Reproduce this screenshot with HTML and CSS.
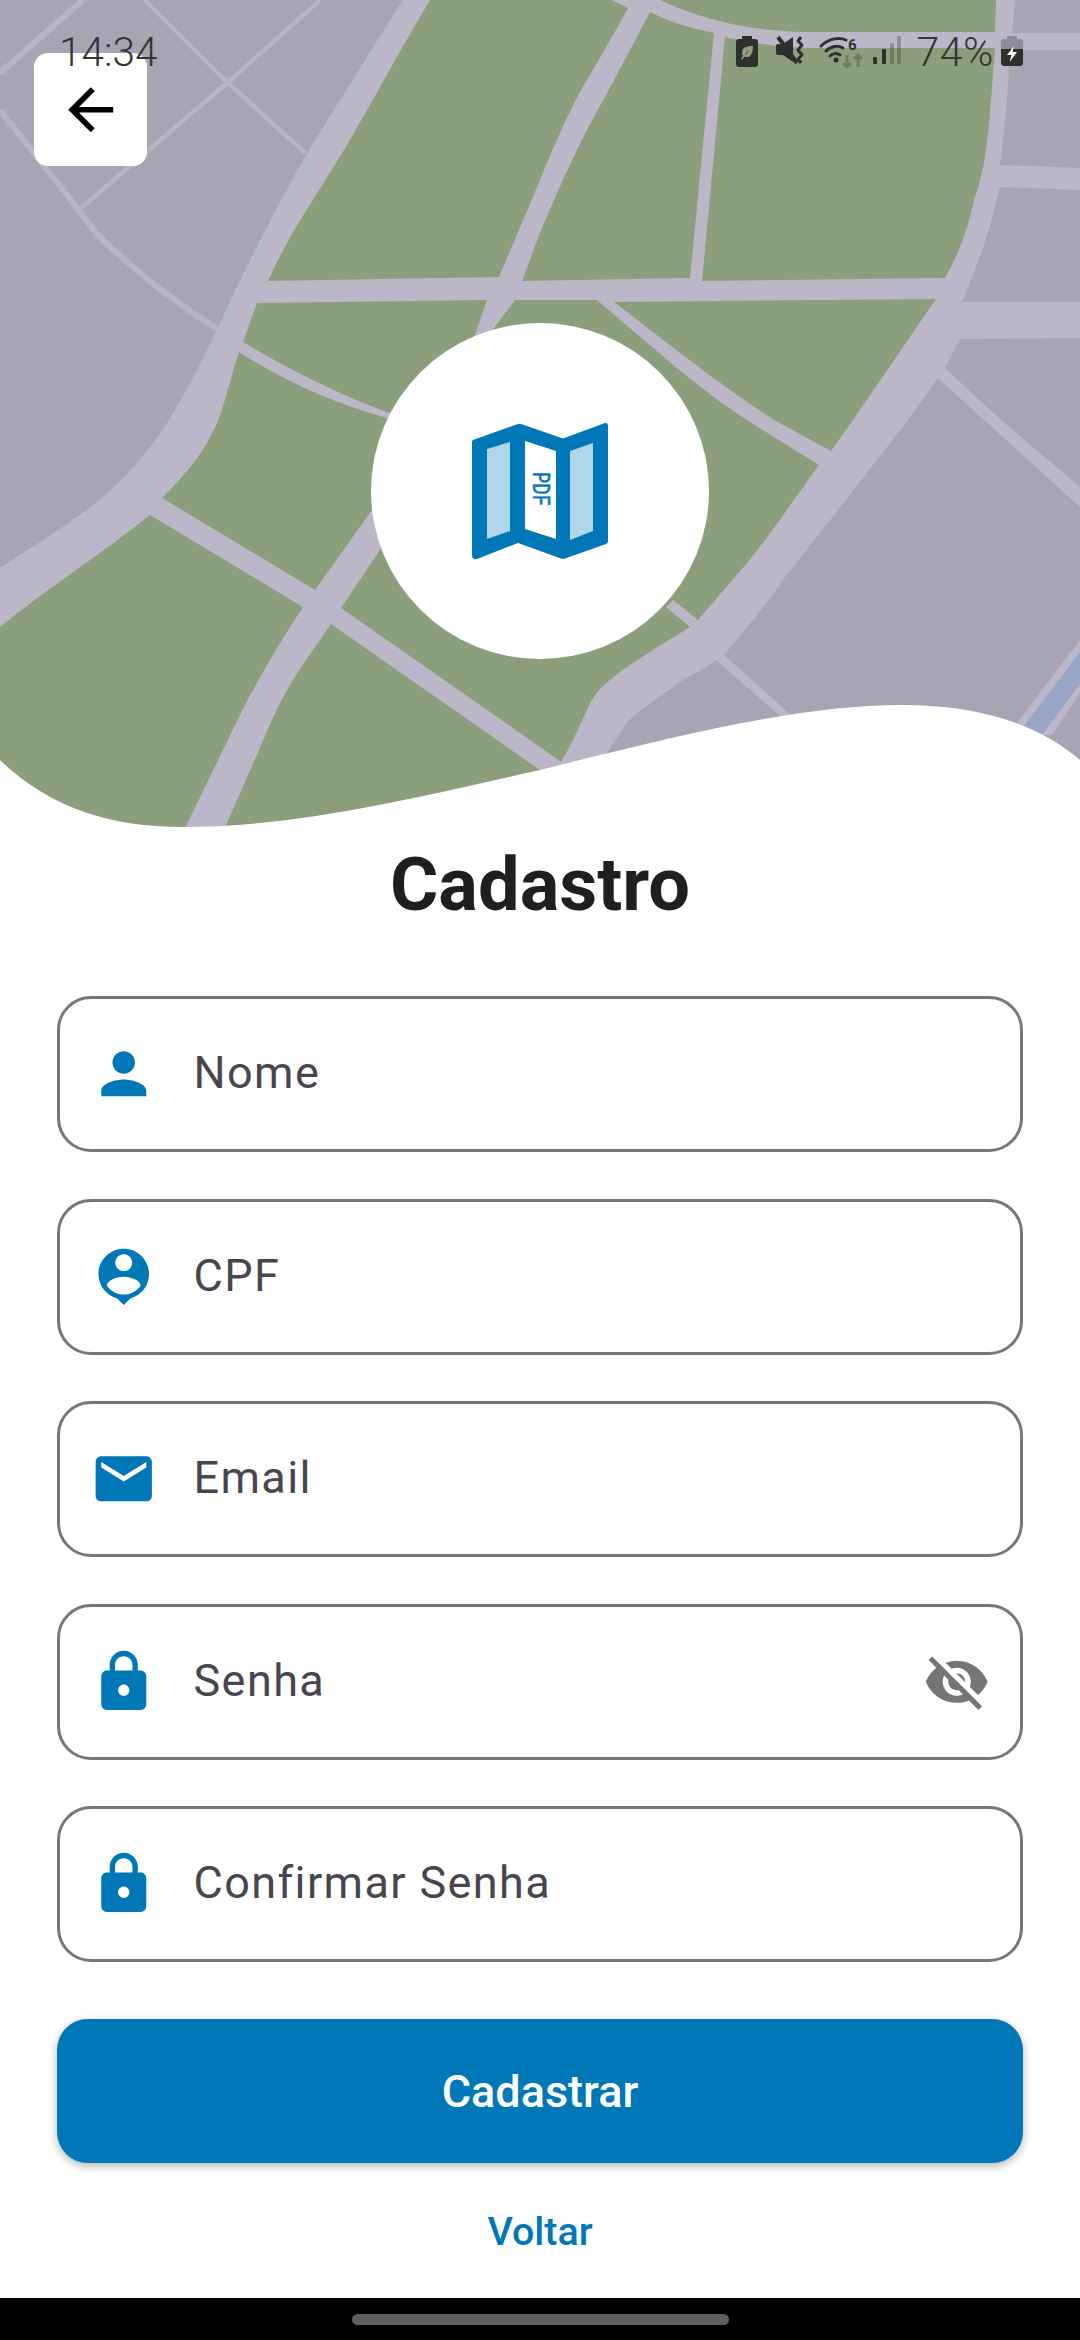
FILE: index.html
```html
<!DOCTYPE html>
<html lang="pt">
<head>
<meta charset="utf-8">
<title>Cadastro</title>
<link rel="stylesheet" href="styles.css">
</head>
<body>
<div class="screen">
  <header class="hero">
    <svg class="map" viewBox="0 0 1080 830" width="1080" height="830">
      <rect class="road" width="1080" height="830"/>
      <g class="gray">
        <path d="M0,0 L403,0 C370,52 335,108 305,157 C280,200 250,260 234,293 C225,312 200,370 169,420 C150,450 128,475 103,497 C75,520 40,542 0,568 Z"/>
        <path d="M1015,0 L1080,0 L1080,33 L1012,33 Z"/>
        <path d="M1010,50 L1080,50 L1080,168 L1000,165 C1005,130 1008,90 1010,50 Z"/>
        <path d="M1000,187 L1080,190 L1080,302 L962,302 C975,270 985,245 990,225 Z"/>
        <path d="M960,339 L1080,338 L1080,487 L1001,420 L945,368 Z"/>
        <path d="M938,378 L1080,507 L1080,830 L800,830 L791,715 L724,655 C745,630 770,600 782,581 L838,510 L908,420 Z"/>
        <path d="M716,660 C700,672 690,675 678,683 C650,705 630,715 622,730 L607,753 L600,830 L781,830 L781,717 Z"/>
      </g>
      <g class="thin">
        <path class="t7" d="M83,0 L0,73"/>
        <path class="t5" d="M145,0 L227,82 L305,153"/>
        <path class="t5" d="M320,0 L227,83 L81,208"/>
        <path class="t7" d="M0,110 L77,208 Q90,226 103,240 Q155,290 219,330"/>
      </g>
      <path class="bank" d="M1080,640 L1008,735 L1052,735 L1080,693 Z"/>
      <path class="river" d="M1080,652 L1017,735 L1042,735 L1080,684 Z"/>
      <g class="green">
        <path d="M430,0 L612,0 L628,8 C605,50 590,75 581,90 C565,120 550,155 540,180 L499,277 L268,281 C290,232 315,198 344,150 C375,97 400,50 430,0 Z"/>
        <path d="M650,12 C670,22 690,28 714,33 L690,278 L522,281 L540,233 C560,185 580,140 605,97 Z"/>
        <path d="M725,37 C760,45 790,48 815,48 L995,48 L991,100 C988,140 985,170 974,200 C968,230 958,255 945,278 L702,281 Z"/>
        <path d="M660,0 C690,14 735,30 800,32 L995,32 L996,0 Z"/>
        <path d="M239,352 C290,385 340,405 387,418 L420,470 L372,510 L315,590 L162,498 C190,470 210,445 222,410 C228,390 233,370 239,352 Z"/>
        <path d="M257,303 L487,300 L475,335 L440,420 L389,413 C340,395 290,370 243,342 Z"/>
        <path d="M614,302 L936,299 L853,420 L831,451 L774,420 C720,385 670,345 614,302 Z"/>
        <path d="M515,300 L597,300 C650,345 700,390 747,420 L819,465 C790,505 770,535 747,563 L698,620 L673,600 L666,607 L690,627 C650,652 610,675 595,695 C585,710 580,730 561,762 L540,747 L341,608 L380,550 L440,400 L500,320 Z"/>
        <path d="M150,515 L303,607 C275,650 255,685 241,713 L184,830 L0,830 L0,627 C45,590 100,555 150,515 Z"/>
        <path d="M331,624 L540,770 L570,830 L224,830 L272,720 C290,680 310,655 331,624 Z"/>
      </g>
      <path class="wave" d="M0,760 C50,808 110,827 183,827 C300,827 420,797 540,770 C680,735 800,705 902,705 C975,705 1035,722 1080,760 L1080,830 L0,830 Z"/>
    </svg>

    <button class="back" type="button" aria-label="Voltar">
      <svg class="icon" viewBox="0 0 24 24"><path d="M20 11H7.830l5.590-5.590L12 4l-8 8 8 8 1.410-1.410L7.830 13H20v-2z"/></svg>
    </button>

    <div class="status">
      <span class="time">14:34</span>
      <div class="status-right">
        <svg class="st st-eco" width="22" height="31" viewBox="0 0 22 31">
          <path class="st-dark" d="M6 0h10v3h3a3 3 0 0 1 3 3v22a3 3 0 0 1-3 3H3a3 3 0 0 1-3-3V6a3 3 0 0 1 3-3h3z"/>
          <path class="st-leaf" d="M17 10c-6 0-11 1-11 7 0 1 .3 2 1 3 -1 1-1.600 2-2 3l1.500.5c.4-1 1-2 2-3 1 .5 2 .7 3 .5 4-.5 5.500-5 5.500-11z M9 18c1.500-2 3.500-3 5-3.500-1.500 1-3 2-4 4z"/>
        </svg>
        <svg class="st" width="29" height="28" viewBox="0 0 29 28">
          <path class="st-dark" d="M0 10a2 2 0 0 1 2-2h5l10-7v25l-10-7H2a2 2 0 0 1-2-2z"/>
          <path class="st-slash" d="M2 1 L21 27"/>
          <path class="st-wave" d="M25 1 L22 5 L26 9 L22 14 L26 19 L22 23 L25 27"/>
        </svg>
        <svg class="st st-wifi" width="44" height="33" viewBox="0 0 44 33">
          <path class="st-arc" d="M1 10 C9 2 20 1 26 4"/>
          <path class="st-arc" d="M6 15 C11 10 18 9 23 12"/>
          <path class="st-arc" d="M10 20 C13 17 17 17 20 19"/>
          <circle class="st-dark" cx="16" cy="24" r="2.500"/>
          <text class="st-six" x="28" y="14">6</text>
          <path class="st-arrow" d="M27 19 V31 M23 27 L27 31 L31 27"/>
          <path class="st-arrow" d="M38 31 V19 M34 23 L38 19 L42 23"/>
        </svg>
        <svg class="st" width="28" height="28" viewBox="0 0 28 28">
          <rect class="st-dark" x="0" y="21" width="4" height="7" rx="1"/>
          <rect class="st-dark" x="9" y="13" width="4" height="15" rx="1"/>
          <rect class="st-faint" x="17" y="7" width="4" height="21" rx="1"/>
          <rect class="st-faint" x="24" y="0" width="4" height="28" rx="1"/>
        </svg>
        <span class="pct">74%</span>
        <svg class="st st-batt" width="22" height="30" viewBox="0 0 22 30">
          <path class="st-faint" d="M6 0h10v3h3a3 3 0 0 1 3 3v7H0V6a3 3 0 0 1 3-3h3z"/>
          <path class="st-dark" d="M0 13h22v14a3 3 0 0 1-3 3H3a3 3 0 0 1-3-3z"/>
          <path class="st-bolt" d="M13 10 L6 19 H10.500 L8.500 26 L16 16 H11.500 Z"/>
        </svg>
      </div>
    </div>

    <div class="badge">
      <svg class="logo" width="136" height="138" viewBox="0 0 136 138">
        <path class="logo-blue" d="M1 18 L46 2 Q47 1.500 49 2 L91 16.500 L133 1 Q136 .5 136 4 L136 120 Q136 121 134 122 L93 136.500 Q91 137 89 136.500 L46 121 L5 137 Q0 138 0 133 L0 20 Q0 18.500 1 18 Z"/>
        <path class="logo-light" d="M15 27 L38 20 L38 109 L15 117 Z"/>
        <path class="logo-light" d="M98 29 L121 21 L121 109 L98 118 Z"/>
        <path class="logo-white" d="M53 19 L84 29 L84 117 L53 107 Z"/>
        <text class="logo-text" transform="translate(61 50) rotate(90)" textLength="34" lengthAdjust="spacingAndGlyphs">PDF</text>
      </svg>
    </div>
  </header>

  <main class="content">
    <h1 class="title">Cadastro</h1>
    <form class="form">
      <div class="field">
        <svg class="icon icon-blue" viewBox="0 0 24 24"><path d="M12 12c2.210 0 4-1.790 4-4s-1.790-4-4-4-4 1.790-4 4 1.790 4 4 4zm0 2c-2.670 0-8 1.340-8 4v2h16v-2c0-2.660-5.330-4-8-4z"/></svg>
        <span class="label">Nome</span>
      </div>
      <div class="field">
        <svg class="icon icon-blue" viewBox="0 0 24 24"><path d="M12 2c-4.970 0-9 4.030-9 9 0 4.170 2.840 7.670 6.690 8.690L12 22l2.310-2.310C18.160 18.670 21 15.170 21 11c0-4.970-4.030-9-9-9zm0 2c1.660 0 3 1.340 3 3s-1.340 3-3 3-3-1.340-3-3 1.340-3 3-3zm0 14.300c-2.500 0-4.710-1.280-6-3.220.03-1.990 4-3.080 6-3.080 1.990 0 5.970 1.090 6 3.080-1.290 1.940-3.500 3.220-6 3.220z"/></svg>
        <span class="label">CPF</span>
      </div>
      <div class="field">
        <svg class="icon icon-blue" viewBox="0 0 24 24"><path d="M20 4H4c-1.100 0-1.990.9-1.990 2L2 18c0 1.100.9 2 2 2h16c1.100 0 2-.9 2-2V6c0-1.100-.9-2-2-2zm0 4l-8 5-8-5V6l8 5 8-5v2z"/></svg>
        <span class="label">Email</span>
      </div>
      <div class="field">
        <svg class="icon icon-blue" viewBox="0 0 24 24"><path d="M18 8h-1V6c0-2.760-2.240-5-5-5S7 3.240 7 6v2H6c-1.100 0-2 .9-2 2v10c0 1.100.9 2 2 2h12c1.100 0 2-.9 2-2V10c0-1.100-.9-2-2-2zm-6 9c-1.100 0-2-.9-2-2s.9-2 2-2 2 .9 2 2-.9 2-2 2zm3.100-9H8.900V6c0-1.710 1.390-3.100 3.100-3.100 1.710 0 3.100 1.390 3.100 3.100v2z"/></svg>
        <span class="label">Senha</span>
        <svg class="icon icon-eye" viewBox="0 0 24 24"><path d="M12 7c2.760 0 5 2.240 5 5 0 .65-.13 1.260-.36 1.830l2.920 2.920c1.510-1.260 2.700-2.890 3.430-4.750-1.730-4.390-6-7.500-11-7.500-1.400 0-2.740.25-3.980.7l2.160 2.160C10.740 7.130 11.350 7 12 7zM2 4.270l2.280 2.280.46.46C3.080 8.300 1.780 10.020 1 12c1.730 4.390 6 7.500 11 7.500 1.550 0 3.030-.3 4.380-.84l.42.42L19.730 22 21 20.730 3.270 3 2 4.270zM7.530 9.800l1.550 1.550c-.05.21-.08.43-.08.65 0 1.660 1.340 3 3 3 .22 0 .44-.03.65-.08l1.550 1.550c-.67.33-1.410.53-2.200.53-2.760 0-5-2.240-5-5 0-.79.2-1.530.53-2.200zm4.310-.78l3.150 3.150.02-.16c0-1.660-1.340-3-3-3l-.17.01z"/></svg>
      </div>
      <div class="field">
        <svg class="icon icon-blue" viewBox="0 0 24 24"><path d="M18 8h-1V6c0-2.760-2.240-5-5-5S7 3.240 7 6v2H6c-1.100 0-2 .9-2 2v10c0 1.100.9 2 2 2h12c1.100 0 2-.9 2-2V10c0-1.100-.9-2-2-2zm-6 9c-1.100 0-2-.9-2-2s.9-2 2-2 2 .9 2 2-.9 2-2 2zm3.100-9H8.900V6c0-1.710 1.390-3.100 3.100-3.100 1.710 0 3.100 1.390 3.100 3.100v2z"/></svg>
        <span class="label">Confirmar Senha</span>
      </div>
      <button class="submit" type="button">Cadastrar</button>
      <a class="link">Voltar</a>
    </form>
  </main>

  <footer class="nav"><span class="pill"></span></footer>
</div>
</body>
</html>
```

FILE: styles.css
```css
* { box-sizing: border-box; }

html, body {
  margin: 0;
  padding: 0;
  background: #fff;
}

.screen {
  width: 1080px;
  height: 2340px;
  display: flex;
  flex-direction: column;
  overflow: hidden;
  background: #fff;
  font-family: Roboto, "Liberation Sans", sans-serif;
}

/* hero and map */
.hero {
  position: relative;
  height: 830px;
  flex: none;
}
.map { display: block; }
.road { fill: #bbb7c9; }
.gray path { fill: #a8a4b4; }
.green path { fill: #8c9f7d; }
.thin path { fill: none; stroke: #b8b4c6; }
.t5 { stroke-width: 4.500px; }
.t7 { stroke-width: 6px; }
.bank { fill: #bbb7c9; }
.river { fill: #98a5c6; }
.wave { fill: #fff; }

/* status bar */
.status {
  position: absolute;
  top: 36px;
  left: 59px;
  right: 57px;
  height: 33px;
  display: flex;
  align-items: flex-start;
  justify-content: space-between;
  color: #333537;
}
.time, .pct {
  font-weight: 300;
  line-height: 33px;
}
.time { font-size: 40.500px; }
.pct { font-size: 41px; letter-spacing: .6px; }
.status-right {
  display: flex;
  align-items: flex-start;
  gap: 15px;
}
.st { display: block; flex: none; overflow: visible; }
.st-eco { margin-right: 3px; }
.st-wifi { margin-right: -6px; }
.st-batt { margin-left: -8px; }
.st-dark { fill: #2d302d; }
.st-faint { fill: #2d302d; opacity: .3; }
.st-leaf { fill: #8c9f7d; }
.st-bolt { fill: #fff; }
.st-slash { stroke: #2d302d; stroke-width: 4px; fill: none; }
.st-wave { stroke: #2d302d; stroke-width: 3px; fill: none; stroke-linejoin: round; }
.st-arc { stroke: #2d302d; stroke-width: 3px; fill: none; stroke-linecap: round; }
.st-six { fill: #2d302d; font-size: 15px; font-weight: 700; font-family: Roboto, sans-serif; }
.st-arrow { stroke: #2d302d; stroke-width: 3px; fill: none; opacity: .3; }

/* back button */
.back {
  position: absolute;
  top: 53px;
  left: 34px;
  width: 113px;
  height: 113px;
  padding: 0;
  border: 0;
  border-radius: 14px;
  background: #fff;
  display: flex;
  align-items: center;
  justify-content: center;
}

/* logo badge */
.badge {
  position: absolute;
  top: 323px;
  left: 371px;
  width: 338px;
  height: 336px;
  border-radius: 50%;
  background: #fff;
  display: flex;
  align-items: center;
  justify-content: center;
}
.logo { display: block; }
.logo-blue { fill: #0077b6; }
.logo-light { fill: #b2d6e9; }
.logo-white { fill: #fff; }
.logo-text {
  fill: #0077b6;
  font-family: "Liberation Mono", monospace;
  font-weight: 400;
  font-size: 25px;
  stroke: #0077b6;
  stroke-width: .4px;
}

/* icons */
.icon {
  display: block;
  flex: none;
  width: 67.500px;
  height: 67.500px;
  fill: #000;
}
.icon-blue { fill: #0077b6; }
.icon-eye { fill: #757575; margin-left: auto; margin-right: 30px; }

/* content */
.content {
  flex: 1;
  display: flex;
  flex-direction: column;
}
.title {
  margin: 0;
  padding: 12px 0 68px;
  font-size: 74px;
  line-height: 86px;
  font-weight: 700;
  text-align: center;
  color: #1f1f1f;
}
.form {
  display: flex;
  flex-direction: column;
  gap: 46.500px;
  padding: 0 57px;
}
.field {
  height: 156px;
  display: flex;
  align-items: center;
  gap: 36px;
  padding-left: 30px;
  border: 3px solid #79747e;
  border-radius: 34px;
  background: #fff;
}
.label {
  font-size: 45px;
  line-height: 60px;
  letter-spacing: 1.400px;
  color: #49454f;
  padding-bottom: 2px;
}
.submit {
  height: 144px;
  margin-top: 10.500px;
  border: 0;
  border-radius: 31px;
  background: #0077b6;
  color: #fff;
  font-family: Roboto, sans-serif;
  font-size: 45px;
  font-weight: 500;
  box-shadow: 0 3px 8px rgba(0, 0, 0, .3);
}
.link {
  margin-top: -9.500px;
  height: 64px;
  line-height: 64px;
  text-align: center;
  color: #0077b6;
  font-size: 39.400px;
  font-weight: 500;
}

/* gesture bar */
.nav {
  margin-top: auto;
  flex: none;
  height: 42px;
  background: #000;
  display: flex;
  align-items: center;
  justify-content: center;
}
.pill {
  width: 377px;
  height: 11px;
  border-radius: 6px;
  background: #5f5f5f;
}
```
